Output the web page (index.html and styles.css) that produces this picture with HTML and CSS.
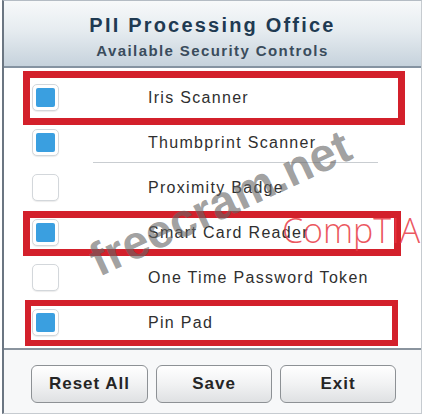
FILE: index.html
```html
<!DOCTYPE html>
<html>
<head>
<meta charset="utf-8">
<link rel="stylesheet" href="styles.css">
</head>
<body>
<div class="window">
  <div class="header">
    <div class="title">PII Processing Office</div>
    <div class="subtitle">Available Security Controls</div>
  </div>
  <div class="list">
    <div class="row hl hl-a"><span class="box checked"></span><span class="label">Iris Scanner</span></div>
    <div class="row sep"><span class="box checked"></span><span class="label">Thumbprint Scanner</span></div>
    <div class="row"><span class="box"></span><span class="label">Proximity Badge</span></div>
    <div class="row hl hl-b"><span class="box checked"></span><span class="label">Smart Card Reader</span></div>
    <div class="row"><span class="box"></span><span class="label">One Time Password Token</span></div>
    <div class="row hl hl-c"><span class="box checked"></span><span class="label">Pin Pad</span></div>
  </div>
  <div class="footer">
    <button class="btn btn-reset">Reset All</button>
    <button class="btn">Save</button>
    <button class="btn">Exit</button>
  </div>
  <div class="wm-site">freecram.net</div>
  <div class="wm-brand">CompTIA</div>
</div>
</body>
</html>
```
FILE: styles.css
```css
html, body {
  margin: 0;
  padding: 0;
  background: #ffffff;
}
body {
  width: 426px;
  height: 420px;
  overflow: hidden;
  font-family: "Liberation Sans", Arial, sans-serif;
}
.window {
  position: relative;
  box-sizing: border-box;
  margin-left: 2px;
  width: 420px;
  height: 414px;
  border-left: 2px solid #6b7682;
  border-top: 1px solid #b4bcc4;
  border-right: 1px solid #c6cbd0;
  border-bottom: 1px solid #c6cbd0;
  background: #ffffff;
  display: flex;
  flex-direction: column;
}
.header {
  height: 67px;
  flex: none;
  border-bottom: 2px solid #8593a1;
  background: linear-gradient(to bottom, #f7f9fa 0%, #e6ecf0 45%, #c6d2dc 100%);
  display: flex;
  flex-direction: column;
  align-items: center;
  padding-top: 12px;
  box-sizing: border-box;
}
.title {
  font-size: 20px;
  font-weight: bold;
  letter-spacing: 2.2px;
  color: #1f3a52;
  line-height: 24px;
}
.subtitle {
  margin-top: 4px;
  font-size: 15px;
  font-weight: bold;
  letter-spacing: 1.4px;
  color: #3a4c5c;
  line-height: 20px;
}
.list {
  flex: none;
  padding-top: 7px;
  padding-bottom: 3px;
}
.row {
  position: relative;
  height: 45px;
  display: flex;
  align-items: center;
  padding-left: 28px;
}
.row.sep::after {
  content: "";
  position: absolute;
  left: 89px;
  width: 285px;
  bottom: 2px;
  height: 1px;
  background: #c9cdd1;
}
.box {
  box-sizing: border-box;
  width: 27px;
  height: 27px;
  border: 1px solid #d3d7db;
  border-radius: 5px;
  background: #ffffff;
  box-shadow: 0 1px 1px rgba(0,0,0,0.08);
  display: flex;
  align-items: center;
  justify-content: center;
  flex: none;
}
.box.checked::before {
  content: "";
  width: 19px;
  height: 19px;
  border-radius: 2px;
  background: #3a9fe0;
}
.label {
  margin-left: 89px;
  font-size: 16px;
  letter-spacing: 1.3px;
  color: #2f2f2f;
}
.hl::before {
  content: "";
  position: absolute;
  border: 7px solid #d3202b;
  box-sizing: border-box;
}
.hl-a::before {
  left: 19px;
  width: 382px;
  top: -4px;
  bottom: -5px;
}
.hl-b::before {
  left: 19px;
  width: 378px;
  top: 1px;
  bottom: -1px;
}
.hl-c::before {
  left: 21px;
  width: 373px;
  top: 0;
  bottom: -1px;
  border-width: 6px;
}
.footer {
  flex: 1;
  border-top: 2px solid #8a949e;
  background: #f7f8f9;
  display: flex;
  gap: 8px;
  padding-left: 27px;
  padding-top: 15px;
  box-sizing: border-box;
}
.btn {
  width: 116px;
  height: 38px;
  border: 1px solid #8d9195;
  border-radius: 6px;
  background: linear-gradient(to bottom, #ffffff 0%, #f1f2f3 50%, #dfe1e3 100%);
  font-family: "Liberation Sans", Arial, sans-serif;
  font-size: 17px;
  font-weight: bold;
  letter-spacing: 1px;
  color: #252525;
  padding: 0;
}
.btn-reset {
  width: 117px;
}
.wm-site {
  position: absolute;
  left: 56px;
  top: 176px;
  width: 320px;
  text-align: center;
  font-size: 47px;
  font-weight: bold;
  line-height: 52px;
  color: rgba(100, 100, 100, 0.62);
  transform: rotate(-25deg);
  transform-origin: center;
  pointer-events: none;
}
.wm-brand {
  position: absolute;
  left: 278px;
  top: 209px;
  font-family: "Open Sans", "Liberation Sans", sans-serif;
  font-size: 34px;
  font-weight: 300;
  line-height: 40px;
  color: rgba(232, 58, 68, 0.85);
  white-space: nowrap;
  pointer-events: none;
}
```
